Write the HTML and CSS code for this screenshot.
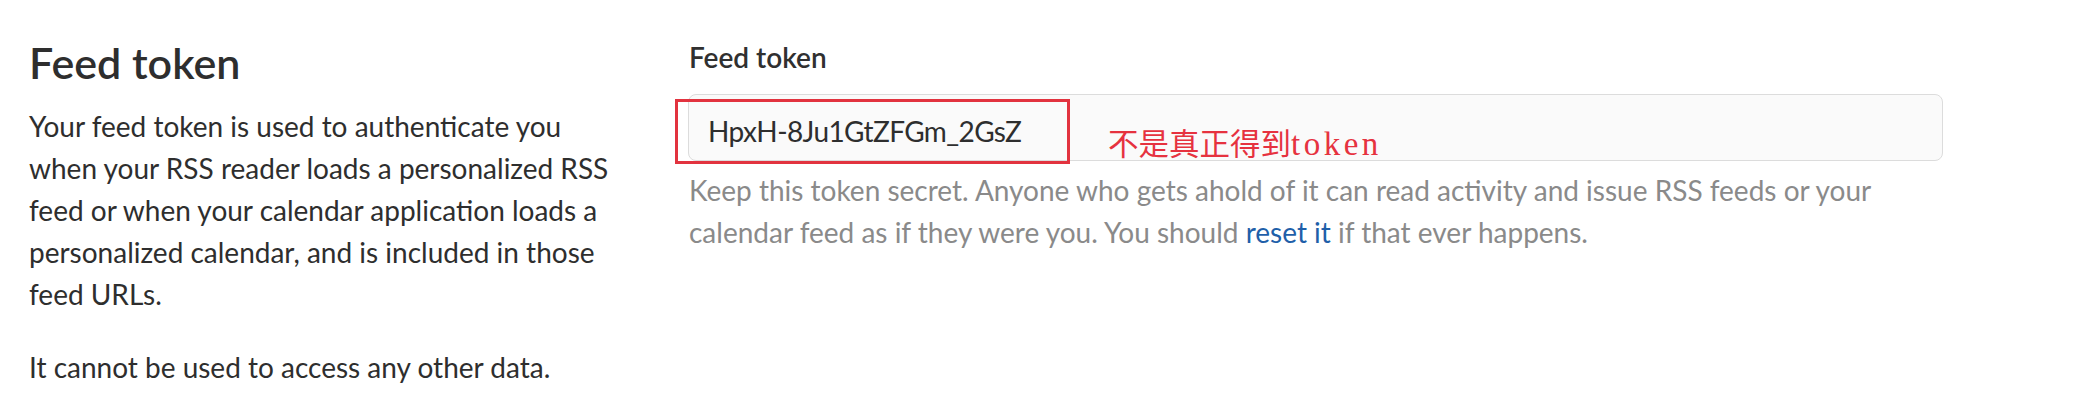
FILE: index.html
```html
<!DOCTYPE html>
<html lang="en">
<head>
<meta charset="utf-8">
<title>Feed token</title>
<link rel="stylesheet" href="styles.css">
</head>
<body>
<div class="settings-row">
  <div class="settings-intro">
    <h4 class="settings-title">Feed token</h4>
    <p>Your feed token is used to authenticate you when your RSS reader loads a personalized RSS feed or when your calendar application loads a personalized calendar, and is included in those feed URLs.</p>
    <p>It cannot be used to access any other data.</p>
  </div>
  <div class="settings-body">
    <label class="field-label" for="feed_token">Feed token</label>
    <div class="field-wrap">
      <input class="field-input" id="feed_token" type="text" readonly value="HpxH-8Ju1GtZFGm_2GsZ">
      <span class="mark-box"></span>
      <span class="mark-note">不是真正得到<span class="mark-latin">token</span></span>
    </div>
    <p class="field-help">Keep this token secret. Anyone who gets ahold of it can read activity and issue RSS feeds or your calendar feed as if they were you. You should <a class="help-link" href="#">reset it</a> if that ever happens.</p>
  </div>
</div>
</body>
</html>
```
FILE: styles.css
```css
html, body {
  margin: 0;
  padding: 0;
  background: #ffffff;
}

body {
  font-family: "Lato", "Noto Sans", sans-serif;
  font-size: 28px;
  line-height: 42px;
  color: #2e2e2e;
}

.settings-row {
  display: flex;
  align-items: flex-start;
  padding-left: 29px;
}

.settings-intro {
  width: 590px;
  flex: 0 0 590px;
  margin-right: 69px;
}

.settings-title {
  margin: 38px 0 17px;
  font-size: 43px;
  line-height: 50px;
  font-weight: 600;
  color: #2e2e2e;
}

.settings-intro p {
  margin: 0 0 31px;
}

.settings-body {
  width: 1255px;
  flex: 0 0 1255px;
  padding-top: 36px;
}

.field-label {
  display: block;
  font-weight: 600;
  color: #303030;
  margin-bottom: 16px;
  padding-left: 1px;
}

.field-wrap {
  position: relative;
}

.field-input {
  display: block;
  box-sizing: border-box;
  width: 100%;
  height: 67px;
  margin: 0;
  padding: 6px 19px 0;
  border: 1px solid #dcdcdc;
  border-radius: 8px;
  background: #fafafa;
  font-family: "Lato", "Noto Sans", sans-serif;
  font-size: 28px;
  letter-spacing: -0.6px;
  color: #2e2e2e;
  outline: none;
}

.mark-box {
  position: absolute;
  left: -13px;
  top: 5px;
  width: 395px;
  height: 65px;
  box-sizing: border-box;
  border: 3px solid #e2333f;
  pointer-events: none;
}

.mark-note {
  position: absolute;
  left: 420px;
  top: 35px;
  font-family: "Liberation Serif", "Noto Sans CJK SC", serif;
  font-size: 30.5px;
  line-height: 30px;
  color: #e6323f;
  white-space: nowrap;
  pointer-events: none;
}

.mark-latin {
  font-size: 33px;
  letter-spacing: 3.5px;
}

.field-help {
  margin: 8px 0 0;
  color: #8a8a8a;
  padding-left: 1px;
}

.help-link {
  color: #1f5fa9;
  text-decoration: none;
}
```
